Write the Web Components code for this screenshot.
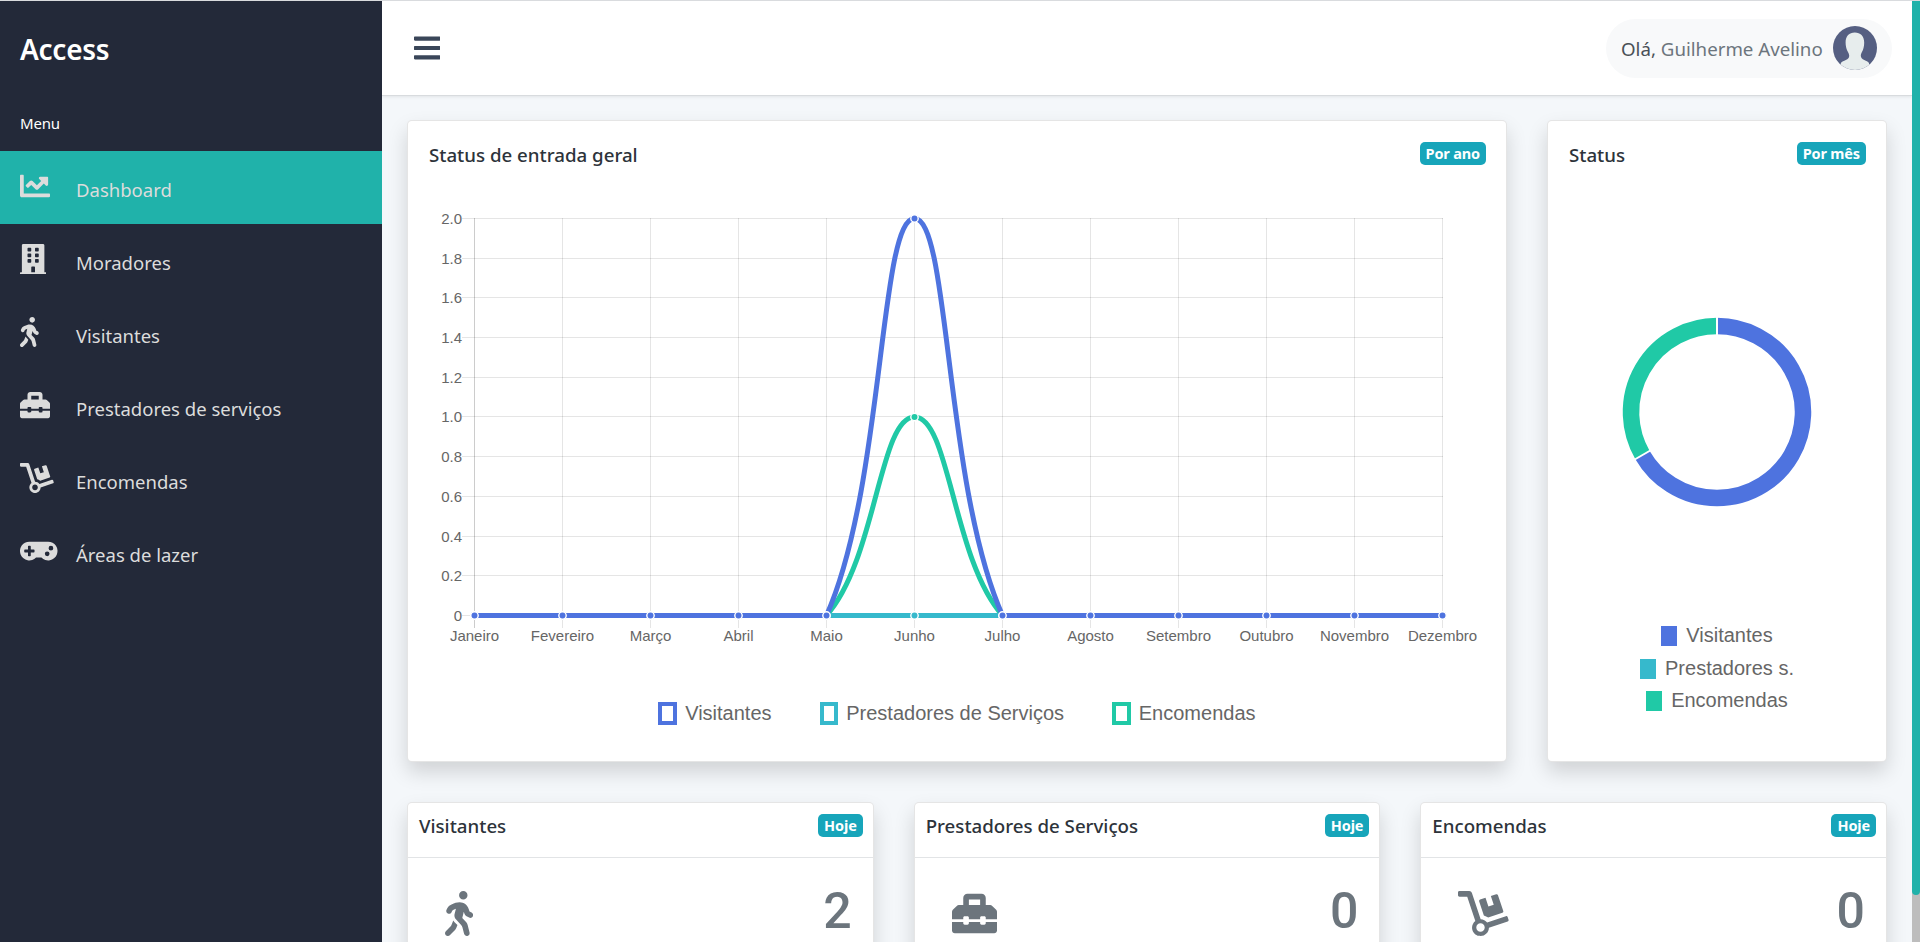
<!DOCTYPE html>
<html lang="pt-BR"><head><meta charset="utf-8"><title>Access</title>
<style>
html,body{margin:0;height:942px;overflow:hidden;background:#f4f7fa;font-family:"Noto Sans","Open Sans",sans-serif}
body{display:flex;flex-direction:column}
</style></head><body>
<app-shell></app-shell>
<script>
const ICONS={
 chart:[512,'M496 384H64V80c0-8.84-7.16-16-16-16H16C7.16 64 0 71.16 0 80v336c0 17.67 14.33 32 32 32h464c8.84 0 16-7.16 16-16v-32c0-8.84-7.16-16-16-16zM464 96H345.94c-21.38 0-32.09 25.85-16.97 40.97l32.4 32.4L288 242.75l-73.37-73.37c-12.5-12.5-32.76-12.5-45.25 0l-68.69 68.69c-6.25 6.25-6.25 16.38 0 22.63l22.62 22.62c6.25 6.25 16.38 6.25 22.63 0L192 237.25l73.37 73.37c12.5 12.5 32.76 12.5 45.25 0l96-96 32.4 32.4c15.12 15.12 40.97 4.41 40.97-16.97V112c.01-8.84-7.15-16-16-16z'],
 building:[448,'M436 480h-20V24c0-13.255-10.745-24-24-24H56C42.745 0 32 10.745 32 24v456H12c-6.627 0-12 5.373-12 12v20h448v-20c0-6.627-5.373-12-12-12zM128 76c0-6.627 5.373-12 12-12h40c6.627 0 12 5.373 12 12v40c0 6.627-5.373 12-12 12h-40c-6.627 0-12-5.373-12-12V76zm0 96c0-6.627 5.373-12 12-12h40c6.627 0 12 5.373 12 12v40c0 6.627-5.373 12-12 12h-40c-6.627 0-12-5.373-12-12v-40zm52 148h-40c-6.627 0-12-5.373-12-12v-40c0-6.627 5.373-12 12-12h40c6.627 0 12 5.373 12 12v40c0 6.627-5.373 12-12 12zm76 160h-64v-84c0-6.627 5.373-12 12-12h40c6.627 0 12 5.373 12 12v84zm64-172c0 6.627-5.373 12-12 12h-40c-6.627 0-12-5.373-12-12v-40c0-6.627 5.373-12 12-12h40c6.627 0 12 5.373 12 12v40zm0-96c0 6.627-5.373 12-12 12h-40c-6.627 0-12-5.373-12-12v-40c0-6.627 5.373-12 12-12h40c6.627 0 12 5.373 12 12v40zm0-96c0 6.627-5.373 12-12 12h-40c-6.627 0-12-5.373-12-12V76c0-6.627 5.373-12 12-12h40c6.627 0 12 5.373 12 12v40z'],
 walking:[320,'M208 96c26.5 0 48-21.5 48-48S234.5 0 208 0s-48 21.5-48 48 21.5 48 48 48zm94.5 149.1l-23.3-11.8-9.7-29.4c-14.7-44.6-55.7-75.8-102.2-75.9-36-.1-55.9 10.1-93.3 25.2-21.6 8.7-39.3 25.2-49.7 46.2L17.6 213c-7.8 15.8-1.5 35 14.2 42.9 15.6 7.9 34.6 1.5 42.5-14.3L81 228c3.5-7 9.3-12.5 16.5-15.4l26.8-10.8-15.2 60.7c-5.2 20.8.4 42.9 14.9 58.8l59.9 65.4c7.2 7.9 12.3 17.4 14.9 27.7l18.3 73.3c4.3 17.1 21.7 27.6 38.8 23.3 17.1-4.3 27.6-21.7 23.3-38.8l-22.2-89c-2.6-10.3-7.7-19.9-14.9-27.7l-45.5-49.7 17.2-68.7 5.5 16.5c5.3 16.1 16.7 29.4 31.7 37l23.3 11.8c15.6 7.9 34.6 1.5 42.5-14.3 7.7-15.7 1.4-35.1-14.3-43zM73.6 385.8c-3.2 8.1-8 15.4-14.2 21.5l-50 50.1c-12.5 12.5-12.5 32.8 0 45.3s32.7 12.5 45.2 0l59.4-59.4c6.1-6.1 10.9-13.4 14.2-21.5l13.5-33.8c-55.3-60.3-38.7-41.8-47.4-53.7l-20.7 51.5z'],
 toolbox:[512,'M502.63 214.63l-45.25-45.25c-6-6-14.14-9.37-22.63-9.37H384V80c0-26.51-21.49-48-48-48H176c-26.51 0-48 21.49-48 48v80H77.25c-8.49 0-16.62 3.37-22.63 9.37L9.37 214.63c-6 6.01-9.37 14.14-9.37 22.63V320h128v-16c0-8.84 7.16-16 16-16h32c8.84 0 16 7.16 16 16v16h128v-16c0-8.84 7.16-16 16-16h32c8.84 0 16 7.16 16 16v16h128v-82.75c0-8.48-3.37-16.62-9.37-22.62zM320 160H192V96h128v64zm64 208c0 8.84-7.16 16-16 16h-32c-8.84 0-16-7.16-16-16v-16H192v16c0 8.84-7.16 16-16 16h-32c-8.84 0-16-7.16-16-16v-16H0v96c0 17.67 14.33 32 32 32h448c17.67 0 32-14.33 32-32v-96H384v16z'],
 dolly:[576,'M294.2 277.7c18 5 34.7 13.4 49.5 24.7l161.5-53.8c8.4-2.8 12.9-11.9 10.1-20.2L454.9 47.2c-2.8-8.4-11.9-12.9-20.2-10.1l-61.1 20.4 33.1 99.4L346 177l-33.1-99.4-61.6 20.5c-8.4 2.8-12.9 11.9-10.1 20.2l53 159.4zm281 48.7L565 296c-2.8-8.4-11.9-12.9-20.2-10.1l-213.5 71.2c-17.2-22-43.6-36.4-73.5-37L158.4 21.9C154 8.8 141.8 0 128 0H16C7.2 0 0 7.2 0 16v32c0 8.8 7.2 16 16 16h88.9l92.2 276.7c-26.1 20.4-41.7 53.6-36 90.5 6.1 39.4 37.9 72.3 77.3 79.2 60.2 10.7 112.3-34.8 113.4-92.6l213.3-71.2c8.3-2.8 12.9-11.8 10.1-20.2zM256 464c-26.5 0-48-21.5-48-48s21.5-48 48-48 48 21.5 48 48-21.5 48-48 48z'],
 gamepad:[640,'M480.07 96H160a160 160 0 1 0 114.24 272h91.52A160 160 0 1 0 480.07 96zM248 268a12 12 0 0 1-12 12h-52v52a12 12 0 0 1-12 12h-24a12 12 0 0 1-12-12v-52H84a12 12 0 0 1-12-12v-24a12 12 0 0 1 12-12h52v-52a12 12 0 0 1 12-12h24a12 12 0 0 1 12 12v52h52a12 12 0 0 1 12 12zm216 76a40 40 0 1 1 40-40 40 40 0 0 1-40 40zm64-96a40 40 0 1 1 40-40 40 40 0 0 1-40 40z'],
 bars:[448,'M16 132h416c8.837 0 16-7.163 16-16V76c0-8.837-7.163-16-16-16H16C7.163 60 0 67.163 0 76v40c0 8.837 7.163 16 16 16zm0 160h416c8.837 0 16-7.163 16-16v-40c0-8.837-7.163-16-16-16H16c-8.837 0-16 7.163-16 16v40c0 8.837 7.163 16 16 16zm0 160h416c8.837 0 16-7.163 16-16v-40c0-8.837-7.163-16-16-16H16c-8.837 0-16 7.163-16 16v40c0 8.837 7.163 16 16 16z']
};
function def(name,css,html,extra){
  customElements.define(name,class extends HTMLElement{
    connectedCallback(){
      if(this.shadowRoot)return;
      const r=this.attachShadow({mode:'open'});
      r.innerHTML='<style>'+css+'</style>'+(typeof html==='function'?html(this):html);
      if(extra)extra(this,r);
    }
  });
}
def('fa-icon',':host{display:inline-block;line-height:0}svg{display:block;fill:currentColor}',h=>{
  const [w,d]=ICONS[h.getAttribute('name')];const s=+(h.getAttribute('size')||30);
  return `<svg width="${s*w/512}" height="${s}" viewBox="0 0 ${w} 512"><path d="${d}"/></svg>`;
});
def('nav-item',`:host{display:flex;height:73px;padding-left:20px;align-items:flex-start;color:#dcdcdc;box-sizing:border-box}
:host([active]){background:#20b2aa}
.i{width:56px;flex:none;padding-top:20px}
.t{font-size:18.5px;line-height:26px;padding-top:26px}`,
 h=>`<div class="i"><fa-icon name="${h.getAttribute('icon')}" size="30"></fa-icon></div><div class="t"><slot></slot></div>`);
def('side-bar',`:host{display:block;width:382px;flex:none;background:#232939;color:#fff;height:100%}
.b{font-size:28px;font-weight:600;line-height:38px;padding:29px 20px 0;height:69px;box-sizing:content-box;letter-spacing:-.25px}
.m{font-size:15px;line-height:20px;padding:14px 20px 0;height:38px;letter-spacing:-.2px}`,
`<div class="b">Access</div><div class="m">Menu</div><slot></slot>`);
def('badge-tag',`:host{display:inline-block;background:#17a5ba;color:#fff;border-radius:5px;font-size:14.5px;font-weight:700;padding:0 6px;height:22.5px;line-height:22px;white-space:nowrap;letter-spacing:-.15px}`,`<slot></slot>`);
def('user-pill',`:host{display:flex;align-items:center;height:59px;background:#f8f9fa;border-radius:30px;padding:0 15px;box-sizing:border-box;width:286px;font-size:18.7px;color:#6c757d;white-space:nowrap}
.o{color:#495057}
svg{margin-left:auto;display:block;flex:none}`,
`<span><span class="o">Olá,</span> Guilherme Avelino</span><svg width="44" height="44" viewBox="0 0 44 44"><defs><clipPath id="c"><circle cx="22" cy="22" r="22"/></clipPath></defs><circle cx="22" cy="22" r="22" fill="#555f82"/><path clip-path="url(#c)" fill="#e7eded" d="M21.8 6.5c5.6 0 9.4 3.6 9.4 10 0 3-.6 6-1.6 8.2-.9 2-1.8 3-1.8 5 0 2 1.3 3.2 3.5 4.3 2 1 3.5 1.6 4.7 3L36 46H8l-.2-9c1.3-1.3 3-1.9 5-2.9 2.3-1.1 3.4-2.4 3.4-4.4 0-2-1-3-1.9-5-1-2.2-1.7-5.2-1.7-8.2 0-6.5 3.6-10 9.2-10z"/></svg>`);
def('top-bar',`:host{display:flex;align-items:center;justify-content:space-between;height:95px;box-sizing:border-box;background:#fff;border-bottom:1px solid #d8dbde;box-shadow:0 1px 3px rgba(0,0,0,.08);padding:0 20px 0 32px;flex:none;position:relative;z-index:2;color:#3a4659}`,
`<fa-icon name="bars" size="30"></fa-icon><slot></slot>`);
def('base-card',`:host{display:flex;flex-direction:column;background:#fff;border:1px solid rgba(0,0,0,.1);border-radius:5px;box-shadow:0 10px 20px rgba(0,0,0,.15);box-sizing:border-box;min-width:0}
.h{display:flex;justify-content:space-between;align-items:flex-start;padding:21px 20px 0 21px;height:59px;box-sizing:border-box;flex:none}
.t{font-size:18.7px;line-height:26px;font-weight:500;color:#2d333a}`,
 h=>`<div class="h"><div class="t">${h.getAttribute('title')}</div><badge-tag>${h.getAttribute('tag')}</badge-tag></div><slot></slot>`);
def('stat-card',`:host{display:block;background:#fff;border:1px solid rgba(0,0,0,.1);border-radius:5px;box-shadow:0 10px 20px rgba(0,0,0,.15);box-sizing:border-box;min-width:0}
.h{display:flex;justify-content:space-between;align-items:flex-start;padding:11px 10px 0 11px;height:55px;box-sizing:border-box;border-bottom:1px solid #e2e4e6}
.t{font-size:18.7px;line-height:26px;font-weight:500;color:#2d333a;margin-top:-1.5px}
.b{display:flex;justify-content:space-between;align-items:flex-start;padding:33px 21px 60px 37px;color:#6c757d}
.n{font-family:Roboto,sans-serif;font-size:50px;line-height:60px;font-weight:500;margin-top:-10px}`,
 h=>`<div class="h"><div class="t">${h.getAttribute('title')}</div><badge-tag>Hoje</badge-tag></div><div class="b"><fa-icon name="${h.getAttribute('icon')}" size="45"></fa-icon><div class="n">${h.getAttribute('value')}</div></div>`);
def('chart-legend',`:host{display:flex;justify-content:center;font-family:"Liberation Sans",Arial,sans-serif;font-size:20px;color:#666;gap:48px}
:host([stack]){flex-direction:column;align-items:center;gap:12.6px}
.i{display:flex;align-items:flex-start;gap:8px}
.i span{line-height:20px;margin-top:1px}
s{display:block;flex:none;width:18.7px;height:23.7px;box-sizing:border-box;border:4px solid var(--c)}
:host([stack]) .i{gap:9.5px}
:host([stack]) .i span{margin-top:-1px}
:host([stack]) s{width:15.5px;height:20px;border:none;background:var(--c)}`,
 h=>JSON.parse(h.getAttribute('items')).map(([c,t])=>`<div class="i" style="--c:${c}"><s></s><span>${t}</span></div>`).join(''));
customElements.define('line-chart',class extends HTMLElement{
  connectedCallback(){
    if(this.shadowRoot)return;
    const r=this.attachShadow({mode:'open'});
    const X0=474.5,DX=88,Y0=615.5,Y2=218.5,months=['Janeiro','Fevereiro','Março','Abril','Maio','Junho','Julho','Agosto','Setembro','Outubro','Novembro','Dezembro'];
    const ys=[218.5,258.5,297.5,337.5,377.5,416.5,456.5,496.5,536.5,575.5,615.5],yl=['2.0','1.8','1.6','1.4','1.2','1.0','0.8','0.6','0.4','0.2','0'];
    let g='';
    months.forEach((m,i)=>{const x=X0+DX*i;g+=`<line x1="${x}" x2="${x}" y1="218" y2="628" stroke="rgba(0,0,0,${i?.1:.2})"/><text x="${x}" y="640.8" text-anchor="middle">${m}</text>`});
    ys.forEach((y,i)=>{g+=`<line x1="462" x2="1443" y1="${y}" y2="${y}" stroke="rgba(0,0,0,.1)"/><text x="462" y="${y+5}" text-anchor="end">${yl[i]}</text>`});
    const Yv=v=>Y0+(Y2-Y0)*v/2;
    const cap=y=>Math.min(Y0,Math.max(Y2,y));
    const curve=(vals)=>{
      const p=vals.map((v,i)=>[X0+DX*i,Yv(v)]);
      const cp=p.map((c,i)=>{const a=p[i-1]||c,b=p[i+1]||c;const d1=Math.hypot(c[0]-a[0],c[1]-a[1]),d2=Math.hypot(b[0]-c[0],b[1]-c[1]);
        const s=d1+d2||1;const fa=.4*d1/s,fb=.4*d2/s;
        return [[c[0]-fa*(b[0]-a[0]),cap(c[1]-fa*(b[1]-a[1]))],[c[0]+fb*(b[0]-a[0]),cap(c[1]+fb*(b[1]-a[1]))]]});
      let d=`M${p[0]}`;
      for(let i=1;i<p.length;i++)d+=`C${cp[i-1][1]} ${cp[i][0]} ${p[i]}`;
      return [d,p];
    };
    const mk=(vals,c)=>{const [d,p]=curve(vals);return `<path d="${d}" fill="none" stroke="${c}" stroke-width="5"/>`+p.map(q=>`<circle cx="${q[0]}" cy="${q[1]}" r="3.7" fill="${c}" stroke="#fff" stroke-width="1.4"/>`).join('')};
    const z=Array(12).fill(0);const a=[...z];a[5]=2;const b=[...z];b[5]=1;
    r.innerHTML=`<style>:host{display:block;height:470px}svg{display:block}text{font:15px "Liberation Sans",Arial,sans-serif;fill:#666}</style>
    <svg width="1098" height="470" viewBox="408 180 1098 470">${g}${mk(b,'#20c9a6')}${mk(z,'#36b9cc')}${mk(a,'#4e73df')}</svg>`;
  }
});
def('donut-chart',`:host{display:block;padding-top:93px}svg{display:block;margin:0 auto}`,()=>{
  const cx=168,cy=139,R=86,S=16.5;
  const pt=a=>[cx+R*Math.sin(a),cy-R*Math.cos(a)];
  const arc=(a,b,col,lg)=>{const p=pt(a),q=pt(b);return `<path d="M${p}A${R} ${R} 0 ${lg} 1 ${q}" fill="none" stroke="${col}" stroke-width="${S}"/>`};
  const t=Math.PI*4/3;
  return `<svg width="336" height="290" viewBox="0 0 336 290">${arc(0,t,'#4e73df',1)}${arc(t,2*Math.PI-.0001,'#20c9a6',0)}
  <line x1="${cx}" y1="${cy-R-10}" x2="${cx}" y2="${cy-R+10}" stroke="#fff" stroke-width="2"/>
  <line x1="${cx+(R-10)*Math.sin(t)}" y1="${cy-(R-10)*Math.cos(t)}" x2="${cx+(R+10)*Math.sin(t)}" y2="${cy-(R+10)*Math.cos(t)}" stroke="#fff" stroke-width="2"/></svg>`;
});
def('app-shell',`:host{display:flex;flex:1;min-height:0;height:942px;border-top:1px solid #d9dbde;box-sizing:border-box;overflow:hidden}
.main{flex:1;min-width:0;display:flex;flex-direction:column;overflow:hidden}
.content{padding:24px 25px 0 25px;display:flex;flex-direction:column;gap:40px}
.r1{display:grid;grid-template-columns:1fr 340px;gap:40px;height:642px;flex:none}
.r2{display:grid;grid-template-columns:repeat(3,1fr);gap:40px;flex:none}
.lg{margin-top:51.5px}
.st{margin-top:63px}
.sb{width:8px;flex:none;display:flex;flex-direction:column;background:#bdbdbd}
.sb i{display:block;height:894px;background:#20b2aa;border-radius:0 0 4px 4px}`,
`<side-bar>
 <nav-item icon="chart" active>Dashboard</nav-item>
 <nav-item icon="building">Moradores</nav-item>
 <nav-item icon="walking">Visitantes</nav-item>
 <nav-item icon="toolbox">Prestadores de serviços</nav-item>
 <nav-item icon="dolly">Encomendas</nav-item>
 <nav-item icon="gamepad">Áreas de lazer</nav-item>
</side-bar>
<div class="main">
 <top-bar><user-pill></user-pill></top-bar>
 <div class="content">
  <div class="r1">
   <base-card title="Status de entrada geral" tag="Por ano">
     <line-chart></line-chart>
     <chart-legend class="lg" items='[["#4e73df","Visitantes"],["#36b9cc","Prestadores de Serviços"],["#20c9a6","Encomendas"]]'></chart-legend>
   </base-card>
   <base-card title="Status" tag="Por mês">
     <donut-chart></donut-chart>
     <chart-legend stack class="st" items='[["#4e73df","Visitantes"],["#36b9cc","Prestadores s."],["#20c9a6","Encomendas"]]'></chart-legend>
   </base-card>
  </div>
  <div class="r2">
   <stat-card title="Visitantes" icon="walking" value="2"></stat-card>
   <stat-card title="Prestadores de Serviços" icon="toolbox" value="0"></stat-card>
   <stat-card title="Encomendas" icon="dolly" value="0"></stat-card>
  </div>
 </div>
</div>
<div class="sb"><i></i></div>`);
</script>
</body></html>
